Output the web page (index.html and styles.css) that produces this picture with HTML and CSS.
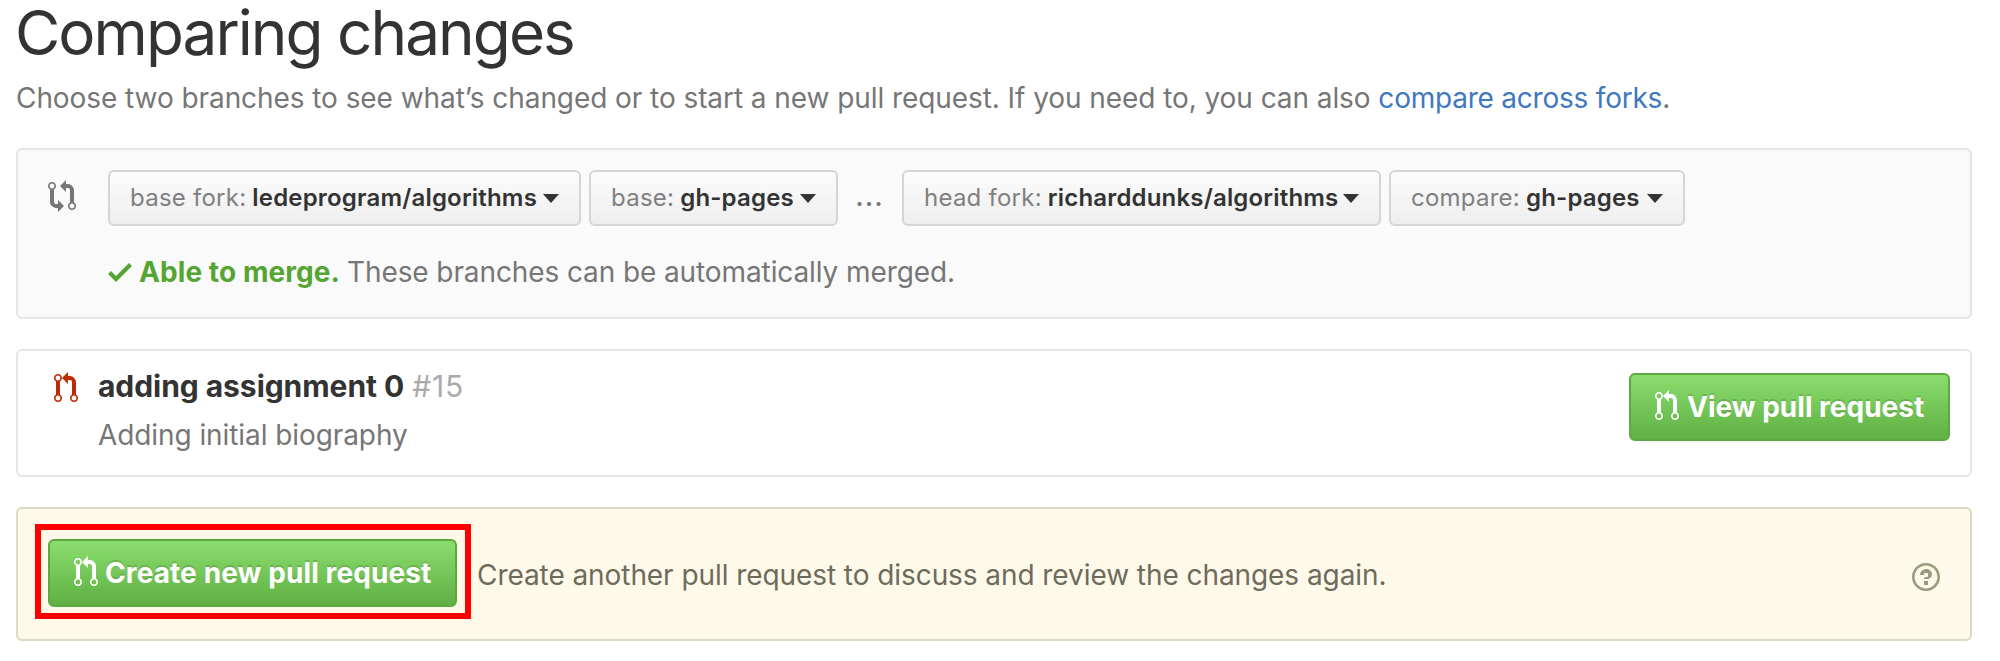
FILE: index.html
```html
<!DOCTYPE html>
<html lang="en">
<head>
<meta charset="utf-8">
<title>Comparing changes</title>
<link rel="stylesheet" href="styles.css">
</head>
<body>
<svg class="sprite" aria-hidden="true">
  <symbol id="pull-request" viewBox="0 0 12 16"><path fill-rule="evenodd" d="M11 11.28V5c-.03-.78-.34-1.47-.94-2.06C9.46 2.35 8.78 2.03 8 2H7V0L4 3l3 3V4h1c.27.02.48.11.69.31.21.2.3.42.31.69v6.28A1.993 1.993 0 0 0 10 15a1.993 1.993 0 0 0 1-3.72zm-1 2.92c-.66 0-1.2-.55-1.2-1.2 0-.65.55-1.2 1.2-1.2.65 0 1.2.55 1.2 1.2 0 .65-.55 1.2-1.2 1.2zM4 3c0-1.11-.89-2-2-2a1.993 1.993 0 0 0-1 3.72v6.56A1.993 1.993 0 0 0 2 15a1.993 1.993 0 0 0 1-3.72V4.72c.59-.34 1-.98 1-1.72zm-.8 10c0 .66-.55 1.2-1.2 1.2-.65 0-1.2-.55-1.2-1.2 0-.65.55-1.2 1.2-1.2.65 0 1.2.55 1.2 1.2zM2 4.2C1.34 4.2.8 3.65.8 3c0-.65.55-1.2 1.2-1.2.65 0 1.2.55 1.2 1.2 0 .65-.55 1.2-1.2 1.2z"/></symbol>
</svg>
<main class="page">
  <h1 class="heading">Comparing changes</h1>
  <p class="lead">Choose two branches to see what’s changed or to start a new pull request. If you need to, you can also <a class="link" href="#">compare across forks</a>.</p>

  <section class="range">
    <svg class="range-icon" viewBox="0 0 14 16"><path fill-rule="evenodd" d="M5 12H4c-.27-.02-.48-.11-.69-.31-.21-.2-.3-.42-.31-.69V4.72A1.993 1.993 0 0 0 2 1a1.993 1.993 0 0 0-1 3.72V11c.03.78.34 1.47.94 2.06.6.59 1.28.91 2.06.94h1v2l3-3-3-3v2zM2 1.8c.66 0 1.2.55 1.2 1.2 0 .65-.55 1.2-1.2 1.2C1.34 4.2.8 3.65.8 3c0-.65.55-1.2 1.2-1.2zm11 9.48V5c-.03-.78-.34-1.47-.94-2.06-.6-.59-1.28-.91-2.06-.94H9V0L6 3l3 3V4h1c.27.02.48.11.69.31.21.2.3.42.31.69v6.28A1.993 1.993 0 0 0 12 15a1.993 1.993 0 0 0 1-3.72zm-1 2.92c-.66 0-1.2-.55-1.2-1.2 0-.65.55-1.2 1.2-1.2.65 0 1.2.55 1.2 1.2 0 .65-.55 1.2-1.2 1.2z"/></svg>
    <div class="range-body">
      <div class="selectors">
        <button class="select base-fork"><span class="label">base fork:</span><b class="value">ledeprogram/algorithms</b></button>
        <button class="select base"><span class="label">base:</span><b class="value">gh-pages</b></button>
        <span class="dots">...</span>
        <button class="select head-fork"><span class="label">head fork:</span><b class="value">richarddunks/algorithms</b></button>
        <button class="select compare"><span class="label">compare:</span><b class="value">gh-pages</b></button>
      </div>
      <p class="merge">
        <svg class="check" viewBox="0 0 12 16"><path d="M12 5l-8 8-4-4 1.5-1.5L4 10l6.5-6.5L12 5z"/></svg>
        <strong class="able">Able to merge.</strong>
        <span class="merge-text">These branches can be automatically merged.</span>
      </p>
    </div>
  </section>

  <section class="existing">
    <svg class="icon icon-open"><use href="#pull-request"/></svg>
    <div class="existing-body">
      <h2 class="title">adding assignment 0 <span class="number">#15</span></h2>
      <p class="description">Adding initial biography</p>
    </div>
    <button class="primary view"><svg class="icon"><use href="#pull-request"/></svg><span>View pull request</span></button>
  </section>

  <section class="create">
    <div class="highlight">
      <button class="primary new"><svg class="icon"><use href="#pull-request"/></svg><span>Create new pull request</span></button>
    </div>
    <p class="create-text">Create another pull request to discuss and review the changes again.</p>
    <svg class="help" viewBox="0 0 14 16"><path fill-rule="evenodd" d="M6 10h2v2H6v-2zm4-3.5C10 8.64 8 9 8 9H6c0-.55.45-1 1-1h.5c.28 0 .5-.22.5-.5v-1c0-.28-.22-.5-.5-.5h-1c-.28 0-.5.22-.5.5V7H4c0-1.5 1.5-3 3-3s3 1 3 2.5zM7 2.3c3.14 0 5.7 2.56 5.7 5.7s-2.56 5.7-5.7 5.7A5.71 5.71 0 0 1 1.3 8c0-3.14 2.56-5.7 5.7-5.7zM7 1C3.14 1 0 4.14 0 8s3.14 7 7 7 7-3.14 7-7-3.14-7-7-7z"/></svg>
  </section>
</main>
</body>
</html>
```
FILE: styles.css
```css
* { box-sizing: border-box; margin: 0; }
body { background: #fff; color: #333; font: 400 28px/36px Inter, "Liberation Sans", sans-serif; white-space: nowrap; }
svg { display: block; flex: none; fill: currentColor; }
button { font-family: inherit; white-space: nowrap; }
.sprite { position: absolute; width: 0; height: 0; }
.page { display: flex; flex-direction: column; padding: 0 28px 0 16px; }

.heading { margin-left: -1px; font-size: 62px; font-weight: 400; line-height: 66px; letter-spacing: -1.95px; }
.lead { margin-top: 11px; line-height: 42px; letter-spacing: -0.07px; color: #767676; }
.link { color: #4078c0; text-decoration: none; letter-spacing: -0.22px; }

.range { display: flex; height: 171px; margin-top: 29px; padding: 20px 30px; border: 2px solid #e5e5e5; border-radius: 6px; background: #fafafa; color: #767676; }
.range-icon { width: 28px; height: 32px; margin-top: 10px; }
.range-body { margin-left: 32px; }
.selectors { display: flex; align-items: center; }
.select { display: flex; align-items: center; height: 56px; padding: 0 20px 1px; border: 2px solid #d5d5d5; border-radius: 6px; background: linear-gradient(#fcfcfc, #eee); color: #333; font-size: 24px; line-height: 31px; }
.select::after { content: ""; margin: 1px 0 0 auto; border: 8px solid transparent; border-top: 9px solid #333; border-bottom: 0; }
.label { margin-right: 6px; color: #808080; letter-spacing: 0.24px; }
.value { font-weight: 600; letter-spacing: 0.18px; }
.base-fork { width: 473px; }
.base { width: 249px; margin-left: 8px; }
.dots { width: 64px; padding: 0 1px 4px 0; text-align: center; font-weight: 500; letter-spacing: 1px; }
.head-fork { width: 479px; }
.compare { width: 296px; margin-left: 8px; }
.merge { display: flex; align-items: center; margin-top: 28px; }
.check { width: 24px; height: 32px; color: #55a532; }
.able { width: 201px; margin-left: 7px; color: #55a532; font-weight: 700; letter-spacing: 0.08px; }
.merge-text { margin-left: 7px; letter-spacing: -0.1px; }

.existing { display: flex; align-items: flex-start; height: 128px; margin-top: 30px; padding: 18px 20px 0 36px; border: 2px solid #e5e5e5; border-radius: 6px; }
.icon { width: 24px; height: 32px; }
.icon-open { margin-top: 3px; color: #bd2c00; }
.existing-body { margin-left: 20px; }
.title { margin-top: -1px; font-size: 30px; font-weight: 700; line-height: 36px; letter-spacing: -0.05px; }
.number { margin-left: 1px; color: #aaa; font-weight: 400; letter-spacing: 0.8px; }
.description { margin-top: 13px; color: #767676; letter-spacing: -0.08px; }

.primary { display: flex; align-items: center; height: 68px; padding: 0 24px; border: 2px solid #5ca941; border-radius: 6px; background: linear-gradient(#8add6d, #60b044); color: #fff; font-size: 28px; font-weight: 700; line-height: 36px; text-shadow: 0 -2px 0 rgba(0, 0, 0, 0.15); }
.primary .icon { margin-top: -2px; }
.primary span { margin-left: 7px; }
.view { width: 321px; margin: 4px 0 0 auto; letter-spacing: 0; }
.view span { margin-left: 8px; }
.new { width: 409px; letter-spacing: 0.1px; }

.create { display: flex; align-items: center; height: 134px; margin-top: 30px; padding: 0 30px 0 17px; border: 2px solid #dfd8c2; border-radius: 6px; background: #fff9ea; }
.highlight { height: 95px; width: 436px; margin-top: -5px; padding: 9px 7px; border: 6px solid #f00; }
.create-text { margin: 2px 0 0 6px; color: #6d6b5c; letter-spacing: -0.07px; }
.help { width: 28px; height: 32px; margin: 5px 0 0 auto; color: #9c997d; }
```
